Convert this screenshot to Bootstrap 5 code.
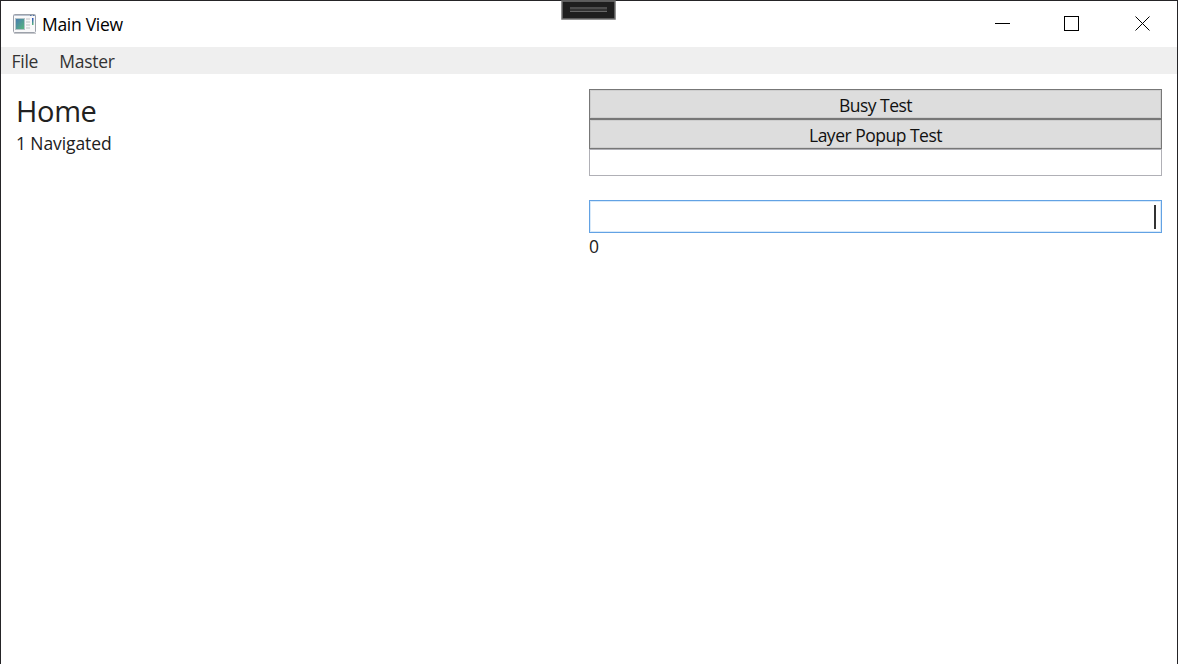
<!DOCTYPE html>
<html lang="en">
<head>
  <meta charset="UTF-8">
  <meta name="viewport" content="width=device-width, initial-scale=1.0">
  <title>Main View</title>
  <!-- Bootstrap CSS -->
  <link href="https://cdn.jsdelivr.net/npm/bootstrap@5.3.3/dist/css/bootstrap.min.css" rel="stylesheet">
  <style>
    body {
      font-family: "Open Sans", "Noto Sans", sans-serif;
      font-size: 17.5px;
      line-height: 24px;
      letter-spacing: -0.5px;
      color: #212121;
    }
    .window {
      border: 1px solid #252427;
      border-bottom: 0;
    }
    .titlebar {
      height: 46px;
      padding-left: 12px;
      color: #000;
    }
    .window-title {
      margin-left: 5px;
      letter-spacing: -0.3px;
    }
    .caption-btn {
      width: 73px;
      height: 46px;
    }
    .caption-btn:first-child {
      width: 65px;
    }
    .caption-btn:last-child {
      width: 69px;
    }
    .menubar {
      height: 27px;
      padding: 0 10.5px;
      gap: 21px;
      letter-spacing: -0.25px;
      background: #efefef;
    }
    .menubar .nav-link {
      line-height: 29px;
      color: #333;
    }
    .debug-handle {
      top: -1px;
      left: 560px;
      width: 55px;
      height: 20px;
    }
    .view {
      padding: 15px;
    }
    .view-title {
      font-size: 29px;
      line-height: 40px;
      margin-top: 2px;
      letter-spacing: -0.35px;
    }
    .view-status {
      letter-spacing: -0.1px;
    }
    .btn-plain {
      height: 30px;
      padding: 2px 0 0;
      font-size: inherit;
      line-height: 27px;
      letter-spacing: inherit;
      color: #111;
      background: #ddd;
      border: 1px solid #777;
      box-shadow: inset 0 0 0 1px #cecece;
    }
    .input-plain {
      height: 27px;
      border: 1px solid #b0b0b6;
    }
    .input-active {
      height: 33px;
      margin-top: 24px;
      margin-bottom: 1px;
      padding-right: 5px;
      border: 1px solid #62a2e4;
      box-shadow: inset 0 0 0 1px #d9eafa;
    }
    .caret {
      width: 2px;
      height: 24px;
      background: #333;
    }
  </style>
</head>
<body>

  <div class="window position-relative vh-100 d-flex flex-column bg-white">

    <!-- Title bar -->
    <div class="titlebar d-flex align-items-center">
      <svg width="24" height="20" viewBox="0 0 24 20">
        <defs>
          <linearGradient id="pane" x1="0" y1="0" x2="1" y2="1">
            <stop offset="0" stop-color="#4779b4"/>
            <stop offset="1" stop-color="#58b979"/>
          </linearGradient>
          <linearGradient id="bar" x1="0" y1="0" x2="0" y2="1">
            <stop offset="0" stop-color="#304fc0"/>
            <stop offset="1" stop-color="#58b979"/>
          </linearGradient>
        </defs>
        <rect x=".5" y=".5" width="22" height="18" rx="1" fill="#f9f9fa" stroke="#9ca1aa"/>
        <path d="M1 1.5h21" stroke="#b9c3d1"/>
        <path d="M17 1.5h1.5M20 1.5h1.5" stroke="#54739e"/>
        <path d="M1 19.5h22" stroke="#c6c8cc"/>
        <rect x="2.5" y="4.5" width="9" height="11" fill="url(#pane)" stroke="#b5c4ca"/>
        <path d="M13 5h4M13 8h4M13 11h4M13 14h4" stroke="#d2d4d6" stroke-width="1.5"/>
        <rect x="19" y="4" width="1.5" height="7" fill="url(#bar)"/>
      </svg>
      <span class="window-title">Main View</span>
      <div class="d-flex ms-auto">
        <div class="caption-btn d-flex align-items-center justify-content-center">
          <svg width="15" height="16" viewBox="0 0 15 16" shape-rendering="crispEdges"><path d="M0 7.5h15" stroke="#000"/></svg>
        </div>
        <div class="caption-btn d-flex align-items-center justify-content-center">
          <svg width="15" height="16" viewBox="0 0 15 16" shape-rendering="crispEdges"><rect x=".5" y=".5" width="14" height="14" fill="none" stroke="#000"/></svg>
        </div>
        <div class="caption-btn d-flex align-items-center justify-content-center">
          <svg width="15" height="16" viewBox="0 0 15 16"><path d="M.5 .5l14 14M14.5 .5l-14 14" stroke="#000"/></svg>
        </div>
      </div>
    </div>

    <!-- Menu -->
    <nav class="menubar nav flex-nowrap">
      <a class="nav-link p-0" href="#">File</a>
      <a class="nav-link p-0" href="#">Master</a>
    </nav>

    <!-- Content -->
    <div class="view row g-0 flex-grow-1 align-content-start">
      <div class="col-6">
        <div class="view-title">Home</div>
        <div class="view-status">1 Navigated</div>
      </div>
      <div class="col-6 d-flex flex-column">
        <button class="btn btn-plain rounded-0" type="button">Busy Test</button>
        <button class="btn btn-plain rounded-0" type="button">Layer Popup Test</button>
        <div class="input-plain"></div>
        <div class="input-active d-flex align-items-center justify-content-end">
          <span class="caret"></span>
        </div>
        <div>0</div>
      </div>
    </div>

    <!-- Debug toolbar handle hanging over the title bar -->
    <svg class="debug-handle position-absolute" viewBox="0 0 55 20">
      <rect x="1" y="1" width="53" height="18" fill="#1e1e1e" stroke="#707070" stroke-width="1.5"/>
      <rect x="9" y="7" width="37" height="5" fill="#333"/>
      <path d="M9 8h37M9 11.5h37" stroke="#666"/>
    </svg>

  </div>

  <!-- Bootstrap JS -->
  <script src="https://cdn.jsdelivr.net/npm/bootstrap@5.3.3/dist/js/bootstrap.bundle.min.js"></script>
</body>
</html>
